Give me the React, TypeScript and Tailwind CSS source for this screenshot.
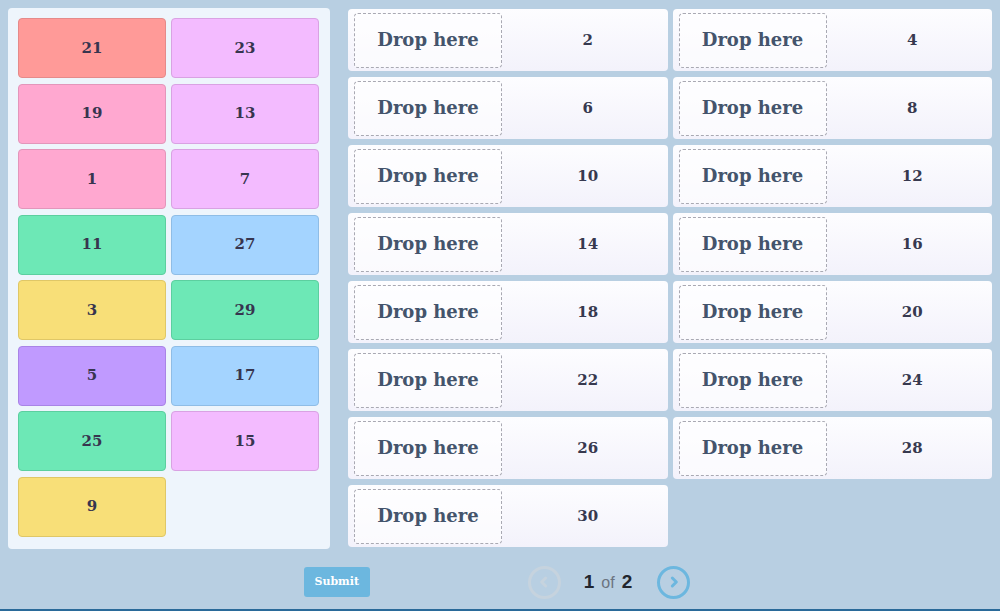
import React from "react";

const cards = [
  { n: 21, c: "bg-[#ff9a98] border-[#e58a8a]" },
  { n: 23, c: "bg-[#f3bbff] border-[#d9a2e3]" },
  { n: 19, c: "bg-[#ffa8d0] border-[#e396bb]" },
  { n: 13, c: "bg-[#f3bbff] border-[#d9a2e3]" },
  { n: 1, c: "bg-[#ffa8d0] border-[#e396bb]" },
  { n: 7, c: "bg-[#f3bbff] border-[#d9a2e3]" },
  { n: 11, c: "bg-[#6de8b6] border-[#5ccf9f]" },
  { n: 27, c: "bg-[#a4d4ff] border-[#8fbde6]" },
  { n: 3, c: "bg-[#f8df78] border-[#dfc767]" },
  { n: 29, c: "bg-[#6de8b6] border-[#5ccf9f]" },
  { n: 5, c: "bg-[#c09aff] border-[#a984e6]" },
  { n: 17, c: "bg-[#a4d4ff] border-[#8fbde6]" },
  { n: 25, c: "bg-[#6de8b6] border-[#5ccf9f]" },
  { n: 15, c: "bg-[#f3bbff] border-[#d9a2e3]" },
  { n: 9, c: "bg-[#f8df78] border-[#dfc767]" },
];

const targets = Array.from({ length: 15 }, (_, i) => (i + 1) * 2);

const serif = "font-['DejaVu_Serif',serif]";

export default function App() {
  return (
    <div className="w-[1000px] h-[611px] bg-[#b8cfe2] flex flex-col overflow-hidden">
      <div className="flex px-2 pt-2 gap-[18px]">
        {/* cards */}
        <div className="w-[322px] h-[541px] bg-[#eef5fc] rounded-[4px] pt-[10px] pl-[10px] pr-[11px]">
          <div className="grid grid-cols-2 gap-x-[5px] gap-y-[5.5px]">
            {cards.map((card) => (
              <div
                key={card.n}
                className={`h-[60px] rounded-[4px] border flex items-center justify-center text-[15px] font-bold text-[#37354f] ${serif} ${card.c}`}
              >
                {card.n}
              </div>
            ))}
          </div>
        </div>

        {/* drop targets */}
        <div className="grid grid-cols-2 gap-x-[5px] gap-y-[6px] content-start pt-px w-[644px]">
          {targets.map((n) => (
            <div
              key={n}
              className="h-[62px] rounded-[4px] bg-gradient-to-b from-[#fdfdff] to-[#f3f2fb] flex items-center pl-[6px]"
            >
              <div
                className={`w-[148px] h-[55px] bg-white/60 rounded-[4px] border border-dashed border-[#a9a9b3] flex items-center justify-center pb-[2px] text-[18px] font-bold text-[#44546c] ${serif}`}
              >
                Drop here
              </div>
              <div className={`flex-1 pl-[6px] text-center text-[15px] font-bold text-[#37394f] ${serif}`}>{n}</div>
            </div>
          ))}
        </div>
      </div>

      {/* footer */}
      <div className="flex items-center justify-center mt-[17px] h-[32px] pr-[6px]">
        <button
          className={`w-[66px] h-[30px] rounded-[3px] bg-[#6cb7df] text-white text-[11px] font-bold ${serif}`}
        >
          Submit
        </button>
        <div className="ml-[158px] w-[33px] h-[33px] rounded-full border-[3px] border-[#c6d3de] flex items-center justify-center">
          <svg width="16" height="16" viewBox="0 0 24 24" fill="none" stroke="#c6d3de" strokeWidth="4.5" strokeLinecap="round" strokeLinejoin="round">
            <path d="M14.5 6l-6 6 6 6" />
          </svg>
        </div>
        <div className="ml-[23px] flex items-baseline gap-[7px] font-['Liberation_Sans',sans-serif]">
          <span className="text-[19px] font-bold text-[#22262e]">1</span>
          <span className="text-[16px] text-[#6b7480]">of</span>
          <span className="text-[19px] font-bold text-[#22262e]">2</span>
        </div>
        <div className="ml-[25px] w-[33px] h-[33px] rounded-full border-[3px] border-[#6cb7df] flex items-center justify-center">
          <svg width="16" height="16" viewBox="0 0 24 24" fill="none" stroke="#6cb7df" strokeWidth="4.5" strokeLinecap="round" strokeLinejoin="round">
            <path d="M9.5 6l6 6-6 6" />
          </svg>
        </div>
      </div>
      <div className="mt-auto h-[2px] bg-[#2a6a99]" />
    </div>
  );
}
